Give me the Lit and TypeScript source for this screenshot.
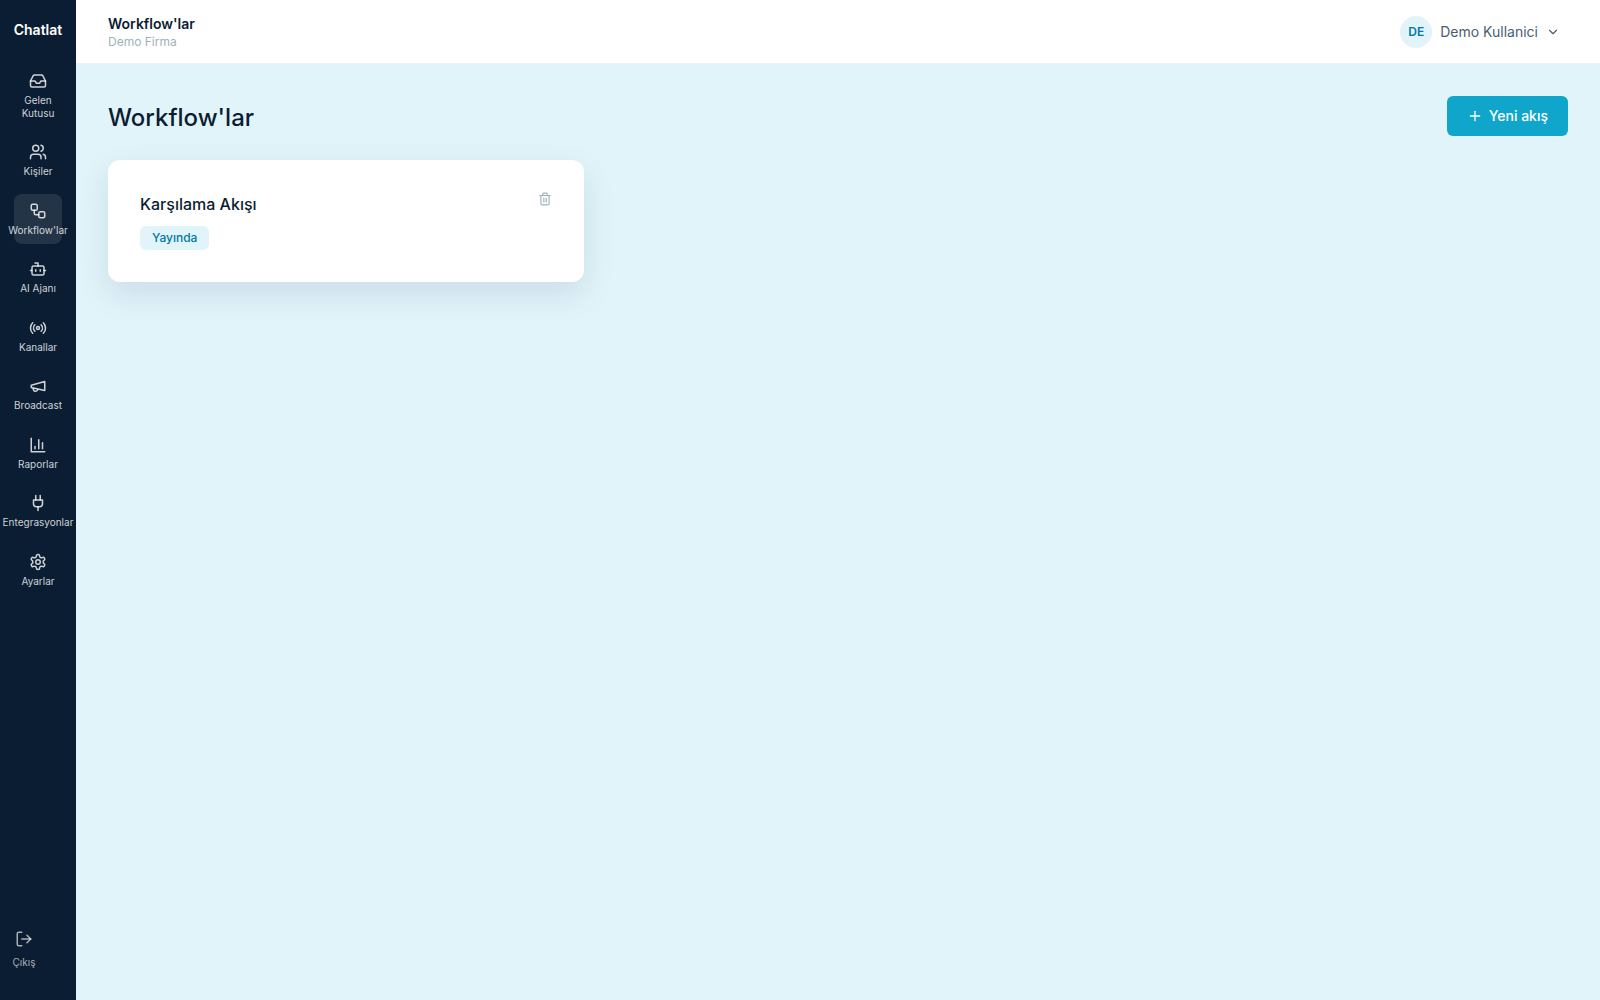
import { LitElement, html, css, svg } from "lit";
import { customElement, property } from "lit/decorators.js";
import { classMap } from "lit/directives/class-map.js";

const icons = {
  inbox: svg`<polyline points="22 12 16 12 14 15 10 15 8 12 2 12"/><path d="M5.45 5.11 2 12v6a2 2 0 0 0 2 2h16a2 2 0 0 0 2-2v-6l-3.45-6.89A2 2 0 0 0 16.76 4H7.24a2 2 0 0 0-1.79 1.11z"/>`,
  users: svg`<path d="M16 21v-2a4 4 0 0 0-4-4H6a4 4 0 0 0-4 4v2"/><circle cx="9" cy="7" r="4"/><path d="M22 21v-2a4 4 0 0 0-3-3.87"/><path d="M16 3.13a4 4 0 0 1 0 7.75"/>`,
  workflow: svg`<rect width="8" height="8" x="3" y="3" rx="2"/><path d="M7 11v4a2 2 0 0 0 2 2h4"/><rect width="8" height="8" x="13" y="13" rx="2"/>`,
  bot: svg`<path d="M12 8V4H8"/><rect width="16" height="12" x="4" y="8" rx="2"/><path d="M2 14h2"/><path d="M20 14h2"/><path d="M15 13v2"/><path d="M9 13v2"/>`,
  radio: svg`<path d="M4.9 19.1C1 15.2 1 8.8 4.9 4.9"/><path d="M7.8 16.2c-2.3-2.3-2.3-6.1 0-8.5"/><circle cx="12" cy="12" r="2"/><path d="M16.2 7.8c2.3 2.3 2.3 6.1 0 8.5"/><path d="M19.1 4.9C23 8.8 23 15.1 19.1 19"/>`,
  megaphone: svg`<path d="m3 11 18-5v12L3 14v-3z"/><path d="M11.6 16.8a3 3 0 1 1-5.8-1.6"/>`,
  chart: svg`<path d="M3 3v18h18"/><path d="M18 17V9"/><path d="M13 17V5"/><path d="M8 17v-3"/>`,
  plug: svg`<path d="M12 22v-5"/><path d="M9 8V2"/><path d="M15 8V2"/><path d="M18 8v5a4 4 0 0 1-4 4h-4a4 4 0 0 1-4-4V8Z"/>`,
  settings: svg`<path d="M12.22 2h-.44a2 2 0 0 0-2 2v.18a2 2 0 0 1-1 1.73l-.43.25a2 2 0 0 1-2 0l-.15-.08a2 2 0 0 0-2.73.73l-.22.38a2 2 0 0 0 .73 2.73l.15.1a2 2 0 0 1 1 1.72v.51a2 2 0 0 1-1 1.74l-.15.09a2 2 0 0 0-.73 2.73l.22.38a2 2 0 0 0 2.73.73l.15-.08a2 2 0 0 1 2 0l.43.25a2 2 0 0 1 1 1.73V20a2 2 0 0 0 2 2h.44a2 2 0 0 0 2-2v-.18a2 2 0 0 1 1-1.73l.43-.25a2 2 0 0 1 2 0l.15.08a2 2 0 0 0 2.73-.73l.22-.39a2 2 0 0 0-.73-2.73l-.15-.08a2 2 0 0 1-1-1.74v-.5a2 2 0 0 1 1-1.74l.15-.09a2 2 0 0 0 .73-2.73l-.22-.38a2 2 0 0 0-2.73-.73l-.15.08a2 2 0 0 1-2 0l-.43-.25a2 2 0 0 1-1-1.73V4a2 2 0 0 0-2-2z"/><circle cx="12" cy="12" r="3"/>`,
  logout: svg`<path d="M9 21H5a2 2 0 0 1-2-2V5a2 2 0 0 1 2-2h4"/><path d="m16 17 5-5-5-5"/><path d="M21 12H9"/>`,
  plus: svg`<path d="M5 12h14"/><path d="M12 5v14"/>`,
  chevron: svg`<path d="m6 9 6 6 6-6"/>`,
  trash: svg`<path d="M3 6h18"/><path d="M19 6v14a2 2 0 0 1-2 2H7a2 2 0 0 1-2-2V6"/><path d="M8 6V4a2 2 0 0 1 2-2h4a2 2 0 0 1 2 2v2"/><path d="M10 11v6"/><path d="M14 11v6"/>`,
};

type IconName = keyof typeof icons;

const icon = (name: IconName, size: number) => html`<svg
  class="icon" width=${size} height=${size} viewBox="0 0 24 24" fill="none"
  stroke="currentColor" stroke-width="2" stroke-linecap="round"
  stroke-linejoin="round" aria-hidden="true">${icons[name]}</svg>`;

const base = css`
  *, *::before, *::after { box-sizing: border-box; }
  .icon { display: block; flex: none; }
  button { font: inherit; color: inherit; border: 0; background: none; margin: 0; padding: 0; cursor: pointer; }
  a { color: inherit; text-decoration: none; }
`;

const navItems: { label: string; icon: IconName; path: string }[] = [
  { label: "Gelen Kutusu", icon: "inbox", path: "inbox" },
  { label: "Kişiler", icon: "users", path: "contacts" },
  { label: "Workflow'lar", icon: "workflow", path: "workflows" },
  { label: "AI Ajanı", icon: "bot", path: "agent" },
  { label: "Kanallar", icon: "radio", path: "channels" },
  { label: "Broadcast", icon: "megaphone", path: "broadcast" },
  { label: "Raporlar", icon: "chart", path: "reports" },
  { label: "Entegrasyonlar", icon: "plug", path: "integrations" },
  { label: "Ayarlar", icon: "settings", path: "settings" },
];

@customElement("side-nav")
export class SideNav extends LitElement {
  @property() current = "workflows";

  static styles = [base, css`
    :host {
      display: flex;
      flex-direction: column;
      align-items: center;
      padding: 20px 12px;
      background: #0b1d33;
      color: #fff;
    }
    .logo { font-size: 14px; line-height: 20px; font-weight: 600; margin-bottom: 24px; }
    .nav { display: flex; flex-direction: column; gap: 8px; width: 48px; }
    .item {
      display: flex;
      flex-direction: column;
      align-items: center;
      gap: 4px;
      padding: 8px 0;
      border-radius: 8px;
      color: rgba(255, 255, 255, 0.8);
      font-size: 10px;
      line-height: 1.25;
      text-align: center;
    }
    .active { background: rgba(255, 255, 255, 0.1); }
    .logout {
      display: flex;
      flex-direction: column;
      align-items: center;
      align-self: flex-start;
      gap: 8px;
      min-width: 24px;
      margin-top: auto;
      padding: 12px 0;
      color: rgba(255, 255, 255, 0.65);
      font-size: 10px;
      line-height: 12px;
    }
  `];

  render() {
    return html`
      <div class="logo">Chatlat</div>
      <nav class="nav">
        ${navItems.map((item) => html`
          <a class=${classMap({ item: true, active: item.path === this.current })} href="#${item.path}">
            ${icon(item.icon, 18)}<span>${item.label}</span>
          </a>`)}
      </nav>
      <button class="logout" type="button">${icon("logout", 18)}<span>Çıkış</span></button>
    `;
  }
}

@customElement("top-bar")
export class TopBar extends LitElement {
  static styles = [base, css`
    :host {
      display: flex;
      align-items: center;
      justify-content: space-between;
      min-height: 64px;
      padding: 0 32px;
      background: #fff;
      border-bottom: 1px solid #edf1f4;
    }
    .title { font-size: 14px; line-height: 20px; font-weight: 600; color: #0b1d33; }
    .company { font-size: 12px; line-height: 16px; color: #9fb3ba; }
    .user {
      display: flex;
      align-items: center;
      gap: 8px;
      padding: 0 8px;
      font-size: 14px;
      line-height: 20px;
      color: #4a6070;
    }
    .avatar {
      display: grid;
      place-items: center;
      width: 32px;
      height: 32px;
      border-radius: 50%;
      background: #e1f4fa;
      color: #0077a6;
      font-size: 12px;
      font-weight: 600;
    }
  `];

  render() {
    return html`
      <div>
        <div class="title">Workflow'lar</div>
        <div class="company">Demo Firma</div>
      </div>
      <button class="user" type="button">
        <span class="avatar">DE</span><span>Demo Kullanici</span>${icon("chevron", 14)}
      </button>
    `;
  }
}

@customElement("workflow-card")
export class WorkflowCard extends LitElement {
  @property() name = "";
  @property() status = "";

  static styles = [base, css`
    :host {
      display: flex;
      align-items: flex-start;
      justify-content: space-between;
      padding: 32px;
      border-radius: 12px;
      background: #fff;
      box-shadow: 0 12px 32px rgba(11, 29, 51, 0.1);
    }
    .name { margin: 0 0 10px; font-size: 16px; line-height: 24px; font-weight: 500; color: #0b1d33; }
    .badge {
      display: inline-block;
      padding: 0 12px;
      border-radius: 6px;
      background: #e1f4fa;
      color: #0077a6;
      font-size: 12px;
      line-height: 24px;
      font-weight: 500;
      vertical-align: top;
    }
    .delete { color: #9fb3ba; }
  `];

  render() {
    return html`
      <div>
        <h2 class="name">${this.name}</h2>
        <span class="badge">${this.status}</span>
      </div>
      <button class="delete" type="button" aria-label="Sil">${icon("trash", 14)}</button>
    `;
  }
}

@customElement("app-root")
export class AppRoot extends LitElement {
  static styles = [base, css`
    :host {
      display: grid;
      grid-template-columns: 76px 1fr;
      min-height: 100vh;
      background: #e1f4fa;
      font-family: Inter, "Liberation Sans", sans-serif;
    }
    .content { padding: 32px; }
    .heading { display: flex; align-items: flex-end; justify-content: space-between; margin-bottom: 24px; }
    .title { margin: 0; font-size: 24px; line-height: 36px; font-weight: 500; color: #0b1d33; }
    .create {
      display: flex;
      align-items: center;
      gap: 6px;
      padding: 10px 20px;
      border-radius: 6px;
      background: #10a5cb;
      color: #fff;
      font-size: 14px;
      line-height: 20px;
      font-weight: 500;
    }
    .cards { display: grid; grid-template-columns: repeat(3, 1fr); gap: 16px; }
  `];

  render() {
    return html`
      <side-nav></side-nav>
      <div>
        <top-bar></top-bar>
        <main class="content">
          <div class="heading">
            <h1 class="title">Workflow'lar</h1>
            <button class="create" type="button">${icon("plus", 16)}<span>Yeni akış</span></button>
          </div>
          <div class="cards">
            <workflow-card name="Karşılama Akışı" status="Yayında"></workflow-card>
          </div>
        </main>
      </div>
    `;
  }
}
